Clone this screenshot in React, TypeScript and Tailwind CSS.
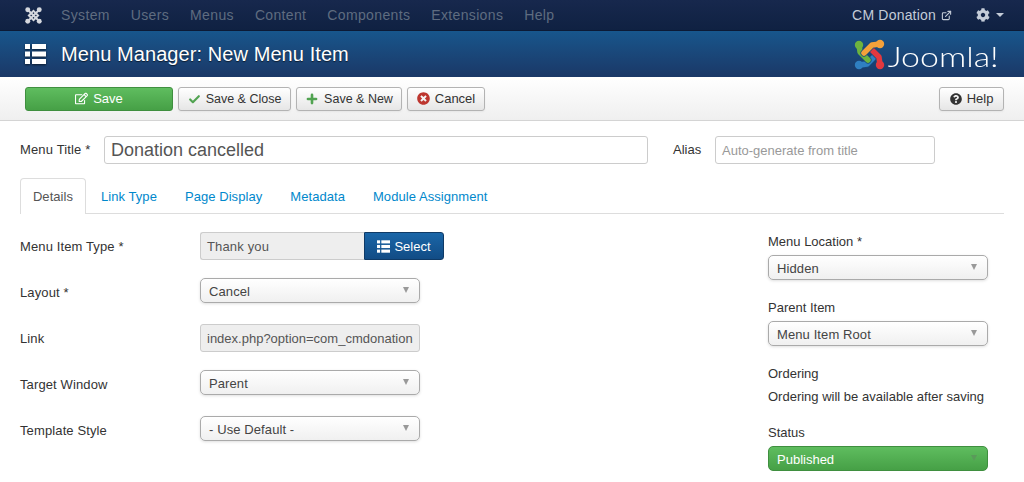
import { Check, ExternalLink, Plus } from 'lucide-react';
import { FaCog, FaQuestionCircle, FaTimesCircle, FaRegEdit } from 'react-icons/fa';

const font = { fontFamily: '"Liberation Sans", Arial, sans-serif' };

const navItems = ['System', 'Users', 'Menus', 'Content', 'Components', 'Extensions', 'Help'];
const tabs = ['Link Type', 'Page Display', 'Metadata', 'Module Assignment'];

function ListIcon({ className }: { className: string }) {
  return (
    <svg viewBox="0 0 21 20" className={className} fill="currentColor">
      <rect x="0" y="0" width="5" height="5" />
      <rect x="7" y="0" width="14" height="5" />
      <rect x="0" y="7.5" width="5" height="5" />
      <rect x="7" y="7.5" width="14" height="5" />
      <rect x="0" y="15" width="5" height="5" />
      <rect x="7" y="15" width="14" height="5" />
    </svg>
  );
}

// four interlaced arms, each one the last turned by 90 degrees
const arms = [
  { d: 'M5 26 L13 25 L21 17', cx: 5, cy: 26, color: '#2f7fc1' },
  { d: 'M5 5 L6 13 L14 21', cx: 5, cy: 6, color: '#6cb33f' },
  { d: 'M26 26 L25 18 L17 10', cx: 26, cy: 26, color: '#e2383f' },
  { d: 'M26 5 L18 6 L10 14', cx: 26, cy: 5, color: '#f4a13a' },
];

function JoomlaMark({ className }: { className: string }) {
  return (
    <svg viewBox="0 0 31 31" className={className} fill="none" strokeLinecap="round" strokeLinejoin="round">
      {arms.map((a) => (
        <g key={a.color}>
          <path d={a.d} stroke="#174a7c" strokeWidth="7" />
          <path d={a.d} stroke={a.color} strokeWidth="5.5" />
          <circle cx={a.cx} cy={a.cy} r="4.2" fill={a.color} />
        </g>
      ))}
    </svg>
  );
}

function NavMark({ className }: { className: string }) {
  return (
    <svg viewBox="0 0 31 31" className={className} fill="none" stroke="#d5d8de">
      <path d="M5 5 L26 26 M26 5 L5 26" strokeWidth="3.5" />
      <path d="M15.5 7 L24 15.5 L15.5 24 L7 15.5 Z" strokeWidth="3.5" />
      <circle cx="5" cy="5" r="4.5" fill="#d5d8de" stroke="none" />
      <circle cx="26" cy="5" r="4.5" fill="#d5d8de" stroke="none" />
      <circle cx="5" cy="26" r="4.5" fill="#d5d8de" stroke="none" />
      <circle cx="26" cy="26" r="4.5" fill="#d5d8de" stroke="none" />
    </svg>
  );
}

function Caret() {
  return <span className="mb-[3px] h-0 w-0 border-x-[3.5px] border-t-[6px] border-x-transparent border-t-[#999]" />;
}

function Select({ value, w = 'w-[220px]' }: { value: string; w?: string }) {
  return (
    <div
      className={`${w} flex h-[25px] items-center justify-between rounded-[5px] border border-[#aaa] bg-gradient-to-b from-white to-[#f0f0f0] pl-[8px] pr-[10px] pt-[2px] text-[13px] leading-none tracking-[0.1px] text-[#444] shadow-[0_1px_3px_rgba(0,0,0,0.13)]`}
    >
      <span>{value}</span>
      <Caret />
    </div>
  );
}

function ToolButton({ children, className = '' }: { children: React.ReactNode; className?: string }) {
  return (
    <button
      className={`flex h-[24px] items-center justify-center gap-[5px] rounded-[3px] border border-[#b3b3b3] bg-gradient-to-b from-white to-[#e6e6e6] text-[#333] shadow-[0_1px_2px_rgba(0,0,0,0.05)] ${className}`}
    >
      {children}
    </button>
  );
}

function Row({ label, children }: { label: string; children: React.ReactNode }) {
  return (
    <div className="flex h-[46px] items-center">
      <label className="w-[180px] text-[13px] tracking-[0.12px] text-[#333]">{label}</label>
      {children}
    </div>
  );
}

export default function App() {
  return (
    <div className="h-[482px] w-[1024px] overflow-hidden bg-white" style={font}>
      <nav className="flex h-[31px] items-center justify-between border-b border-[#0c1a35] bg-gradient-to-b from-[#17284d] to-[#0f2142] pl-[25px] pr-[20px]">
        <div className="flex items-center">
          <NavMark className="mr-[19px] h-[17px] w-[17px]" />
          <div className="flex gap-[21px] text-[14px] tracking-[0.35px] text-[#5f6c80]">
            {navItems.map((n) => (
              <span key={n}>{n}</span>
            ))}
          </div>
        </div>
        <div className="flex items-center text-[14px] text-[#c4ccd8]">
          <span className="tracking-[0.2px]">CM Donation</span>
          <ExternalLink className="ml-[5px] h-[11px] w-[11px]" strokeWidth={2.4} />
          <FaCog className="ml-[24px] h-[14px] w-[14px]" />
          <span className="ml-[6px] h-0 w-0 border-x-[4px] border-t-[4px] border-x-transparent border-t-[#c4ccd8]" />
        </div>
      </nav>

      <header className="flex h-[46px] items-center justify-between bg-gradient-to-b from-[#17568c] to-[#1a3867] pl-[25px] pr-[25px] text-white">
        <div className="flex items-center">
          <ListIcon className="mr-[15px] h-[20px] w-[21px] drop-shadow-[0_1px_1px_rgba(0,0,0,0.6)]" />
          <h1 className="text-[20px] leading-none tracking-[0.08px] [text-shadow:0_1px_1px_rgba(0,0,0,0.6)]">Menu Manager: New Menu Item</h1>
        </div>
        <div className="flex items-center">
          <JoomlaMark className="h-[31px] w-[31px]" />
          <span
            className="ml-[22px] origin-right scale-x-[1.21] pt-[3px] text-[28px] font-light leading-none"
            style={{ fontFamily: 'Lato, sans-serif' }}
          >
            Joomla!
          </span>
        </div>
      </header>

      <div className="flex h-[44px] items-center justify-between border-b border-[#d4d4d4] bg-gradient-to-b from-white to-[#efefef] pl-[25px] pr-[20px]">
        <div className="flex gap-[5px]">
          <button className="flex h-[24px] w-[148px] items-center justify-center gap-[5px] rounded-[3px] border border-[#3f8f3f] bg-gradient-to-b from-[#5fbd5f] to-[#46a046] text-[13px] text-white">
            <FaRegEdit className="h-[13px] w-[13px]" />
            Save
          </button>
          <ToolButton className="w-[113px] pt-[1px] text-[12.5px]">
            <Check className="h-[13px] w-[13px] text-[#51a351]" strokeWidth={4} />
            Save &amp; Close
          </ToolButton>
          <ToolButton className="w-[106px] pt-[1px] text-[12.5px]">
            <Plus className="h-[14px] w-[14px] text-[#51a351]" strokeWidth={4.5} />
            Save &amp; New
          </ToolButton>
          <ToolButton className="w-[78px] text-[13px]">
            <FaTimesCircle className="h-[13px] w-[13px] text-[#bd362f]" />
            Cancel
          </ToolButton>
        </div>
        <ToolButton className="w-[65px] text-[13px]">
          <FaQuestionCircle className="h-[12px] w-[12px] text-[#333]" />
          Help
        </ToolButton>
      </div>

      <main className="px-[20px]">
        <div className="flex items-center pt-[15px]">
          <label className="w-[84px] text-[13px] tracking-[0.15px] text-[#333]">Menu Title *</label>
          <div className="flex h-[28px] w-[544px] items-center rounded-[3px] border border-[#ccc] px-[6px] text-[18px] text-[#555]">
            Donation cancelled
          </div>
          <label className="ml-[25px] w-[42px] text-[13px] text-[#333]">Alias</label>
          <div className="flex h-[28px] w-[220px] items-center rounded-[3px] border border-[#ccc] px-[6px] pt-[1px] text-[13px] text-[#999]">
            Auto-generate from title
          </div>
        </div>

        <div className="mt-[14px] flex h-[36px] border-b border-[#ddd] text-[13px] tracking-[0.06px]">
          <div className="flex h-[36px] w-[66px] items-center justify-center rounded-t-[4px] border-x border-t border-[#ddd] bg-white text-[#555]">
            Details
          </div>
          <div className="flex h-[35px] items-center gap-[28px] pl-[15px] pt-[2px] text-[#0088cc]">
            {tabs.map((t) => (
              <span key={t}>{t}</span>
            ))}
          </div>
        </div>

        <div className="flex justify-between pt-[10px]">
          <div>
            <Row label="Menu Item Type *">
              <div className="mb-[2px] flex h-[28px]">
                <div className="flex w-[164px] items-center rounded-l-[3px] border border-r-0 border-[#ccc] bg-[#eee] px-[6px] pt-[2px] text-[13px] tracking-[0.15px] text-[#555]">
                  Thank you
                </div>
                <button className="flex w-[80px] items-center justify-center gap-[4px] rounded-r-[3px] border border-[#0f3a66] bg-gradient-to-b from-[#1a66a8] to-[#124c85] pt-[1px] text-[13px] text-white">
                  <ListIcon className="h-[13px] w-[13px]" />
                  Select
                </button>
              </div>
            </Row>
            <Row label="Layout *">
              <div className="mb-[6px]">
                <Select value="Cancel" />
              </div>
            </Row>
            <Row label="Link">
              <div className="mb-[2px] flex h-[28px] w-[220px] items-center overflow-hidden whitespace-nowrap rounded-[3px] border border-[#ccc] bg-[#eee] pl-[6px] pt-[2px] text-[13px] text-[#555]">
                index.php?option=com_cmdonation
              </div>
            </Row>
            <Row label="Target Window">
              <div className="mb-[6px]">
                <Select value="Parent" />
              </div>
            </Row>
            <Row label="Template Style">
              <div className="mb-[6px]">
                <Select value="- Use Default -" />
              </div>
            </Row>
          </div>

          <div className="w-[236px] pt-[9px] text-[13px] text-[#333]">
            <div className="leading-[18px]">Menu Location *</div>
            <div className="mt-[4px]">
              <Select value="Hidden" />
            </div>
            <div className="mt-[19px] leading-[18px]">Parent Item</div>
            <div className="mt-[4px]">
              <Select value="Menu Item Root" />
            </div>
            <div className="mt-[19px] leading-[18px]">Ordering</div>
            <div className="mt-[5px] leading-[18px]">Ordering will be available after saving</div>
            <div className="mt-[18px] leading-[18px]">Status</div>
            <div className="mt-[4px] flex h-[25px] w-[220px] items-center justify-between rounded-[5px] border border-[#3f8f3f] bg-gradient-to-b from-[#5fbd5f] to-[#46a046] pl-[8px] pr-[10px] pt-[2px] leading-none text-white">
              <span>Published</span>
              <span className="mb-[3px] h-0 w-0 border-x-[3.5px] border-t-[6px] border-x-transparent border-t-[#5a9a5a]" />
            </div>
          </div>
        </div>
      </main>
    </div>
  );
}
